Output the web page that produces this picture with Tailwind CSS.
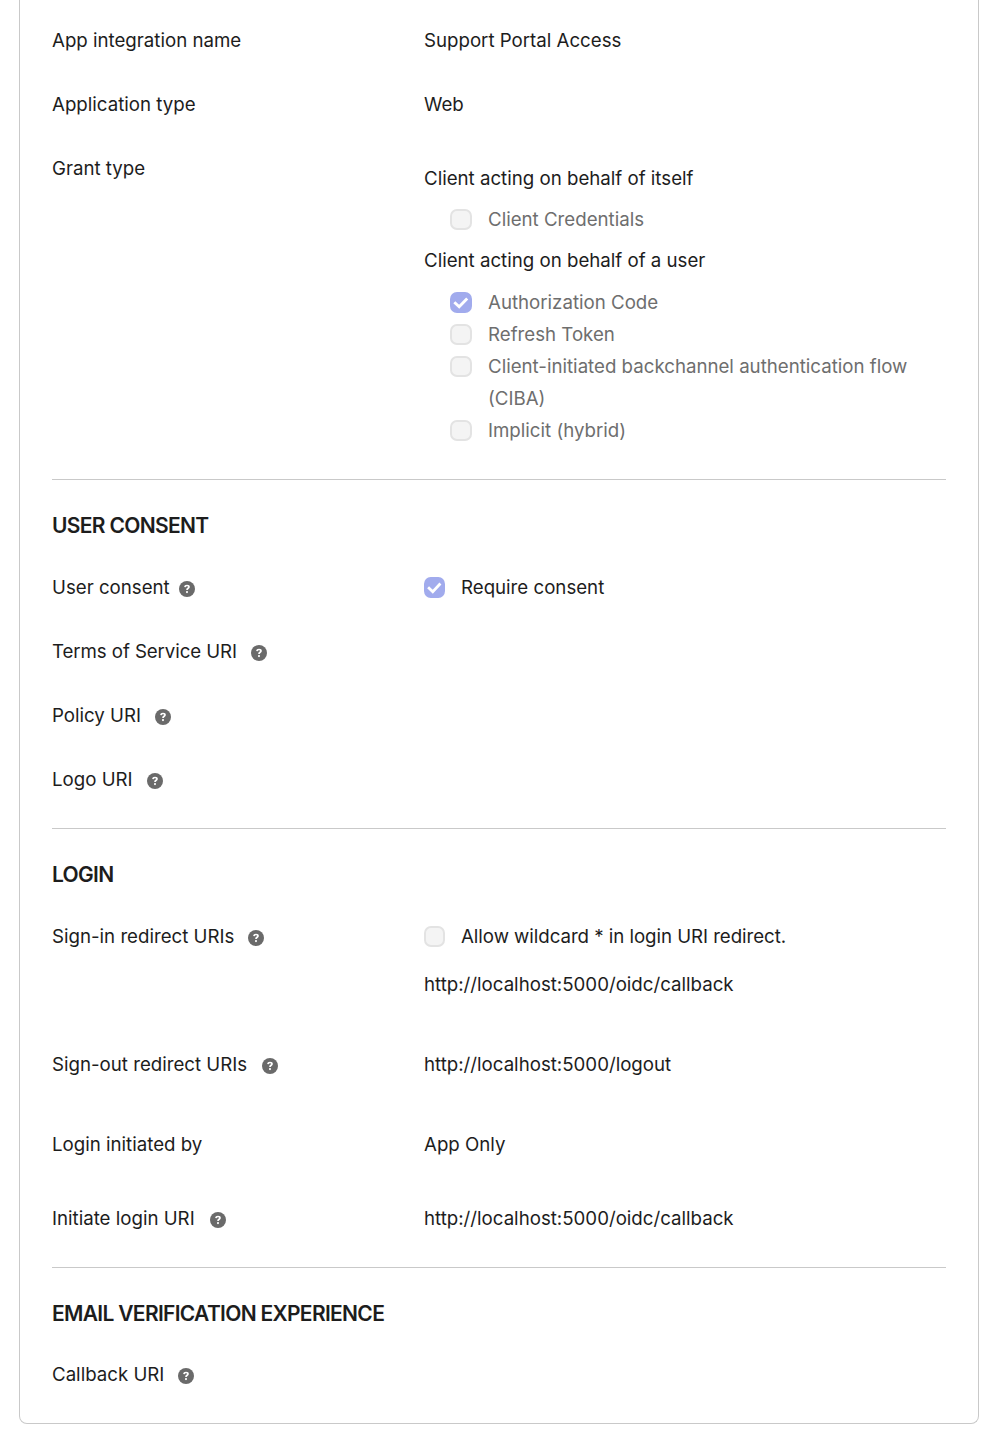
<!DOCTYPE html>
<html lang="en"><head><meta charset="utf-8"><title>Application settings</title>
<script src="https://cdn.jsdelivr.net/npm/@tailwindcss/browser@4"></script></head>
<body class="bg-white h-[1440px] overflow-hidden pl-[19px]">
<svg class="hidden"><symbol id="help" viewBox="0 0 16 16"><circle cx="8" cy="8" r="8" fill="#6a6a6a"/><path d="M5.9 6.2C6 5.1 6.8 4.5 8 4.5c1.2 0 2 .6 2 1.5 0 1.3-2 1.3-2 2.9" fill="none" stroke="#fff" stroke-width="1.7"/><circle cx="8" cy="11.1" r="1.05" fill="#fff"/></symbol>
<symbol id="check" viewBox="0 0 22 21" preserveAspectRatio="none"><rect width="22" height="21" rx="7" fill="#a1abed"/><path d="M4.3 10.2l4.9 4.6 8-8.4" fill="none" stroke="#fff" stroke-width="2.9"/></symbol></svg>
<main class="w-[960px] h-[1424px] border border-t-0 border-[#c9c9c9] rounded-b-lg px-8 font-[Inter,sans-serif] text-[18.68px] leading-8 text-[#1d1d1d]">
<section class="h-[480px] border-b border-[#c9c9c9] pt-[25px]">
<div class="flex h-16"><div class="w-[372px]"><span>App integration name</span></div><div><span>Support Portal Access</span></div></div>
<div class="flex h-16"><div class="w-[372px]"><span>Application type</span></div><div><span>Web</span></div></div>
<div class="flex"><div class="w-[372px]"><span>Grant type</span></div><div class="pt-[10px]">
<div class="h-[41px]"><span>Client acting on behalf of itself</span></div>
<div class="h-[41px] flex pl-[26px] text-[#6e6e6e]"><i class="w-[22px] h-[21px] mt-[5px] mr-4 rounded-[7px] border-2 border-[#e3e3e3] bg-[#f4f4f4]"></i><span>Client Credentials</span></div>
<div class="h-[42px]"><span>Client acting on behalf of a user</span></div>
<div class="h-8 flex pl-[26px] text-[#6e6e6e]"><svg class="w-[22px] h-[21px] mt-[5px] mr-4"><use href="#check"/></svg><span>Authorization Code</span></div>
<div class="h-8 flex pl-[26px] text-[#6e6e6e]"><i class="w-[22px] h-[21px] mt-[5px] mr-4 rounded-[7px] border-2 border-[#e3e3e3] bg-[#f4f4f4]"></i><span>Refresh Token</span></div>
<div class="h-16 flex pl-[26px] text-[#6e6e6e]"><i class="w-[22px] h-[21px] mt-[5px] mr-4 rounded-[7px] border-2 border-[#e3e3e3] bg-[#f4f4f4]"></i><div><span>Client-initiated backchannel authentication flow</span><br><span>(CIBA)</span></div></div>
<div class="h-8 flex pl-[26px] text-[#6e6e6e]"><i class="w-[22px] h-[21px] mt-[5px] mr-4 rounded-[7px] border-2 border-[#e3e3e3] bg-[#f4f4f4]"></i><span>Implicit (hybrid)</span></div>
</div></div></section>
<section class="h-[349px] border-b border-[#c9c9c9] pt-[30px]">
<h2 class="h-[62px] text-[21px] tracking-[-0.68px] font-semibold"><span>USER CONSENT</span></h2>
<div class="flex h-16"><div class="w-[372px] flex"><span>User consent</span><svg class="size-4 mt-[9px] ml-[9px]"><use href="#help"/></svg></div><svg class="size-[21px] mt-[5px] mr-4"><use href="#check"/></svg><span>Require consent</span></div>
<div class="flex h-16"><span class="tracking-[-0.08px]">Terms of Service URI</span><svg class="size-4 mt-[9px] ml-[14px]"><use href="#help"/></svg></div>
<div class="flex h-16"><span>Policy URI</span><svg class="size-4 mt-[9px] ml-[14px]"><use href="#help"/></svg></div>
<div class="flex h-16"><span>Logo URI</span><svg class="size-4 mt-[9px] ml-[14px]"><use href="#help"/></svg></div>
</section>
<section class="h-[439px] border-b border-[#c9c9c9] pt-[30px]">
<h2 class="h-[62px] text-[21px] tracking-[-0.68px] font-semibold"><span>LOGIN</span></h2>
<div class="flex h-32"><div class="w-[372px] flex"><span>Sign-in redirect URIs</span><svg class="size-4 mt-[9px] ml-[14px]"><use href="#help"/></svg></div><div><div class="flex h-12"><i class="size-[21px] mt-[5px] mr-4 rounded-[7px] border-2 border-[#e3e3e3] bg-[#f4f4f4]"></i><span class="tracking-[-0.04px]">Allow wildcard * in login URI redirect.</span></div><span>http://localhost:5000/oidc/callback</span></div></div>
<div class="flex h-20"><div class="w-[372px] flex"><span>Sign-out redirect URIs</span><svg class="size-4 mt-[9px] ml-[15px]"><use href="#help"/></svg></div><span>http://localhost:5000/logout</span></div>
<div class="flex h-[74px]"><div class="w-[372px]"><span>Login initiated by</span></div><span>App Only</span></div>
<div class="flex"><div class="w-[372px] flex"><span>Initiate login URI</span><svg class="size-4 mt-[9px] ml-[15px]"><use href="#help"/></svg></div><span>http://localhost:5000/oidc/callback</span></div>
</section>
<section class="pt-[30px]">
<h2 class="h-[61px] text-[21px] tracking-[-0.68px] font-semibold"><span>EMAIL VERIFICATION EXPERIENCE</span></h2>
<div class="flex"><span>Callback URI</span><svg class="size-4 mt-[9px] ml-[14px]"><use href="#help"/></svg></div>
</section>
</main></body></html>
